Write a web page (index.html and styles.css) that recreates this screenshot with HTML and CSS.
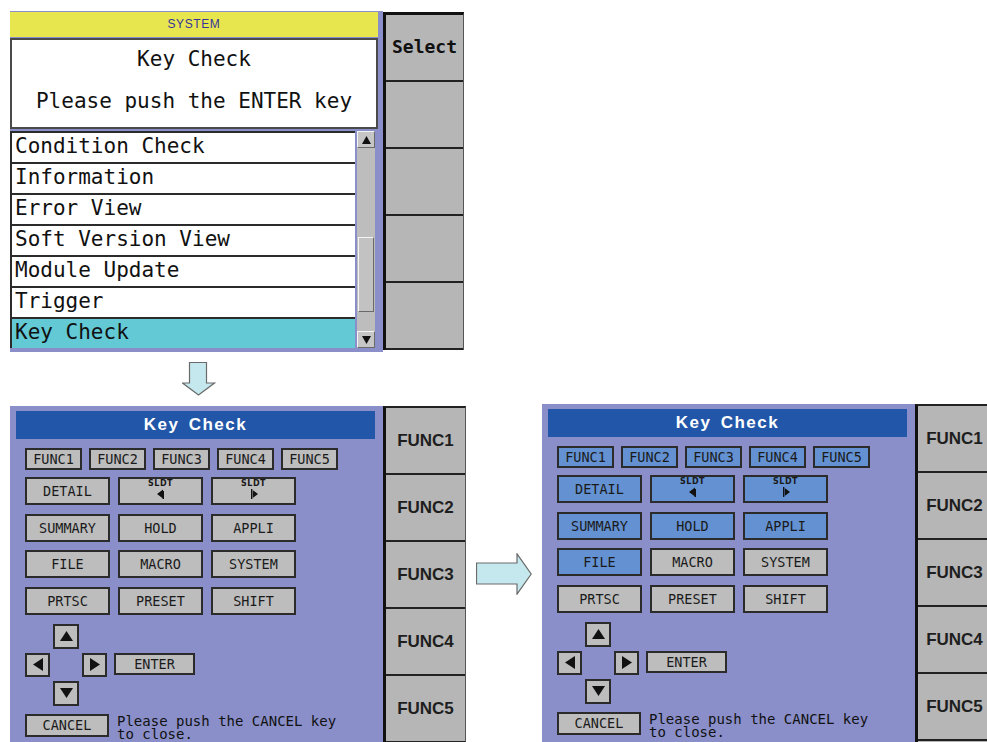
FILE: index.html
```html
<!DOCTYPE html>
<html lang="en">
<head>
    <meta charset="UTF-8">
    <meta name="viewport" content="width=device-width, initial-scale=1.0">
    <title>Key Check</title>
    <link rel="stylesheet" href="styles.css">
</head>
<body>

    <div class="page">
        <!-- SYSTEM menu screen -->
        <div class="screen screen-system">
            <div class="system-main">
                <div class="system-title">SYSTEM</div>
                <div class="msg-box">
                    <div class="msg-first">Key Check</div>
                    <div class="msg-second">Please push the ENTER key</div>
                </div>
                <div class="list-area">
                    <ul class="menu-list">
                        <li class="menu-item">Condition Check</li>
                        <li class="menu-item">Information</li>
                        <li class="menu-item">Error View</li>
                        <li class="menu-item">Soft Version View</li>
                        <li class="menu-item">Module Update</li>
                        <li class="menu-item">Trigger</li>
                        <li class="menu-item selected">Key Check</li>
                    </ul>
                    <div class="scrollbar">
                        <div class="scroll-btn">
                            <svg width="9" height="8" viewBox="0 0 9 8"><path d="M4.5 0 L9 8 H0 Z" fill="#111"/></svg>
                        </div>
                        <div class="scroll-track"><div class="scroll-thumb"></div></div>
                        <div class="scroll-btn">
                            <svg width="9" height="8" viewBox="0 0 9 8"><path d="M0 0 H9 L4.5 8 Z" fill="#111"/></svg>
                        </div>
                    </div>
                </div>
            </div>
            <div class="softkeys softkeys-system">
                <div class="softkey softkey-select">Select</div>
                <div class="softkey"></div>
                <div class="softkey"></div>
                <div class="softkey"></div>
                <div class="softkey"></div>
            </div>
        </div>

        <div class="down-arrow">
            <svg width="34" height="34" viewBox="0 0 34 34">
                <path d="M7.5 0.5 H24.5 V21 H32.5 L16.5 33 L0.5 21 H7.5 Z" fill="#c5e8ef" stroke="#6a6a6a" stroke-width="1.2"/>
            </svg>
        </div>

        <div class="bottom-row">
            <!-- Key Check screen, before -->
            <div class="screen screen-key screen-before">
                <div class="key-main">
                    <div class="key-title">Key Check</div>
                    <div class="key-body">
                        <div class="func-row">
                            <div class="kbtn kbtn-small">FUNC1</div>
                            <div class="kbtn kbtn-small">FUNC2</div>
                            <div class="kbtn kbtn-small">FUNC3</div>
                            <div class="kbtn kbtn-small">FUNC4</div>
                            <div class="kbtn kbtn-small">FUNC5</div>
                        </div>
                        <div class="key-grid">
                            <div class="kbtn">DETAIL</div>
                            <div class="kbtn kbtn-sldt">
                                <span class="sldt-label">SLDT</span>
                                <svg width="8" height="10" viewBox="0 0 8 10"><path d="M0 5 L6 0.5 V9.5 Z M5.5 2 H7 V10 H5.5 Z" fill="#111"/></svg>
                            </div>
                            <div class="kbtn kbtn-sldt">
                                <span class="sldt-label">SLDT</span>
                                <svg width="8" height="10" viewBox="0 0 8 10"><path d="M8 5 L2 0.5 V9.5 Z M1 0 H2.5 V10 H1 Z" fill="#111"/></svg>
                            </div>
                            <div class="kbtn">SUMMARY</div>
                            <div class="kbtn">HOLD</div>
                            <div class="kbtn">APPLI</div>
                            <div class="kbtn">FILE</div>
                            <div class="kbtn">MACRO</div>
                            <div class="kbtn">SYSTEM</div>
                            <div class="kbtn">PRTSC</div>
                            <div class="kbtn">PRESET</div>
                            <div class="kbtn">SHIFT</div>
                        </div>
                        <div class="dpad">
                            <div class="kbtn dkey dkey-up"><svg width="13" height="10" viewBox="0 0 13 10"><path d="M6.5 0 L13 10 H0 Z" fill="#111"/></svg></div>
                            <div class="kbtn dkey dkey-left"><svg width="10" height="13" viewBox="0 0 10 13"><path d="M0 6.5 L10 0 V13 Z" fill="#111"/></svg></div>
                            <div class="kbtn dkey dkey-right"><svg width="10" height="13" viewBox="0 0 10 13"><path d="M10 6.5 L0 0 V13 Z" fill="#111"/></svg></div>
                            <div class="kbtn dkey-enter">ENTER</div>
                            <div class="kbtn dkey dkey-down"><svg width="13" height="10" viewBox="0 0 13 10"><path d="M0 0 H13 L6.5 10 Z" fill="#111"/></svg></div>
                        </div>
                        <div class="cancel-row">
                            <div class="kbtn kbtn-cancel">CANCEL</div>
                            <div class="cancel-note">Please push the CANCEL key to close.</div>
                        </div>
                    </div>
                </div>
                <div class="softkeys softkeys-key">
                    <div class="softkey softkey-func">FUNC1</div>
                    <div class="softkey softkey-func">FUNC2</div>
                    <div class="softkey softkey-func">FUNC3</div>
                    <div class="softkey softkey-func">FUNC4</div>
                    <div class="softkey softkey-func">FUNC5</div>
                </div>
            </div>

            <div class="right-arrow">
                <svg width="56" height="42" viewBox="0 0 56 42">
                    <path d="M0.5 10 H41 V0.8 L55.2 21 L41 41.2 V31 H0.5 Z" fill="#c5e8ef" stroke="#6a6a6a" stroke-width="1.2"/>
                </svg>
            </div>

            <!-- Key Check screen, after pressing keys -->
            <div class="screen screen-key screen-after">
                <div class="key-main">
                    <div class="key-title">Key Check</div>
                    <div class="key-body">
                        <div class="func-row">
                            <div class="kbtn kbtn-small pressed">FUNC1</div>
                            <div class="kbtn kbtn-small pressed">FUNC2</div>
                            <div class="kbtn kbtn-small pressed">FUNC3</div>
                            <div class="kbtn kbtn-small pressed">FUNC4</div>
                            <div class="kbtn kbtn-small pressed">FUNC5</div>
                        </div>
                        <div class="key-grid">
                            <div class="kbtn pressed">DETAIL</div>
                            <div class="kbtn kbtn-sldt pressed">
                                <span class="sldt-label">SLDT</span>
                                <svg width="8" height="10" viewBox="0 0 8 10"><path d="M0 5 L6 0.5 V9.5 Z M5.5 2 H7 V10 H5.5 Z" fill="#111"/></svg>
                            </div>
                            <div class="kbtn kbtn-sldt pressed">
                                <span class="sldt-label">SLDT</span>
                                <svg width="8" height="10" viewBox="0 0 8 10"><path d="M8 5 L2 0.5 V9.5 Z M1 0 H2.5 V10 H1 Z" fill="#111"/></svg>
                            </div>
                            <div class="kbtn pressed">SUMMARY</div>
                            <div class="kbtn pressed">HOLD</div>
                            <div class="kbtn pressed">APPLI</div>
                            <div class="kbtn pressed">FILE</div>
                            <div class="kbtn">MACRO</div>
                            <div class="kbtn">SYSTEM</div>
                            <div class="kbtn">PRTSC</div>
                            <div class="kbtn">PRESET</div>
                            <div class="kbtn">SHIFT</div>
                        </div>
                        <div class="dpad">
                            <div class="kbtn dkey dkey-up"><svg width="13" height="10" viewBox="0 0 13 10"><path d="M6.5 0 L13 10 H0 Z" fill="#111"/></svg></div>
                            <div class="kbtn dkey dkey-left"><svg width="10" height="13" viewBox="0 0 10 13"><path d="M0 6.5 L10 0 V13 Z" fill="#111"/></svg></div>
                            <div class="kbtn dkey dkey-right"><svg width="10" height="13" viewBox="0 0 10 13"><path d="M10 6.5 L0 0 V13 Z" fill="#111"/></svg></div>
                            <div class="kbtn dkey-enter">ENTER</div>
                            <div class="kbtn dkey dkey-down"><svg width="13" height="10" viewBox="0 0 13 10"><path d="M0 0 H13 L6.5 10 Z" fill="#111"/></svg></div>
                        </div>
                        <div class="cancel-row">
                            <div class="kbtn kbtn-cancel">CANCEL</div>
                            <div class="cancel-note">Please push the CANCEL key to close.</div>
                        </div>
                    </div>
                </div>
                <div class="softkeys softkeys-key softkeys-cut">
                    <div class="softkey softkey-func">FUNC1</div>
                    <div class="softkey softkey-func">FUNC2</div>
                    <div class="softkey softkey-func">FUNC3</div>
                    <div class="softkey softkey-func">FUNC4</div>
                    <div class="softkey softkey-func">FUNC5</div>
                </div>
            </div>
        </div>
    </div>

</body>
</html>
```

FILE: styles.css
```css
* {
    box-sizing: border-box;
}
html, body {
    margin: 0;
    overflow: hidden;
}
body {
    width: 987px;
    height: 742px;
    background-color: #ffffff;
    font-family: "DejaVu Sans Mono", monospace;
    color: #111;
}
.page {
    padding-top: 11px;
}
.screen {
    display: flex;
    align-items: flex-start;
    flex-shrink: 0;
}

/* SYSTEM screen */
.screen-system {
    margin-left: 10px;
}
.system-main {
    width: 373px;
    background-color: #8a8fc9;
    padding: 1px 0 4px;
}
.system-title {
    width: 368px;
    height: 25px;
    line-height: 25px;
    background-color: #e8e64f;
    color: #35359a;
    font-family: "Liberation Sans", Arial, sans-serif;
    font-size: 12px;
    letter-spacing: 0.6px;
    text-align: center;
}
.msg-box {
    width: 368px;
    height: 91px;
    margin-top: 1px;
    border: 2px solid #4a4a4a;
    background-color: #fff;
    text-align: center;
    font-size: 21px;
}
.msg-first {
    height: 38px;
    line-height: 38px;
}
.msg-second {
    height: 46px;
    line-height: 46px;
}
.list-area {
    display: flex;
    gap: 2px;
    width: 365px;
    margin-top: 2px;
}
.menu-list {
    list-style: none;
    margin: 0;
    padding: 0;
    width: 345px;
}
.menu-item {
    height: 31px;
    line-height: 27px;
    border-top: 2px solid #2b2b2b;
    border-left: 2px solid #2b2b2b;
    background-color: #fff;
    padding-left: 3px;
    font-size: 21px;
    white-space: nowrap;
}
.menu-item.selected {
    background-color: #62c9d5;
}
.scrollbar {
    width: 18px;
    height: 217px;
    display: flex;
    flex-direction: column;
    background-color: #bdbdbd;
}
.scroll-btn {
    height: 17px;
    display: flex;
    align-items: center;
    justify-content: center;
    background-color: #c6c6c6;
    border: 1px solid;
    border-color: #f4f4f4 #6a6a6a #6a6a6a #f4f4f4;
}
.scroll-track {
    flex: 1;
    padding: 89px 1px 0;
}
.scroll-thumb {
    height: 75px;
    background-color: #c2c2c2;
    border: 1px solid;
    border-color: #f4f4f4 #6a6a6a #6a6a6a #f4f4f4;
}

/* soft keys on the right of each screen */
.softkeys {
    background-color: #b6b6b6;
    border-left: 3px solid #111;
    border-right: 1px solid #555;
}
.softkeys-system {
    width: 81px;
    margin-top: 1px;
    border-top: 3px solid #111;
}
.softkeys-key {
    width: 83px;
    border-top: 2px solid #222;
}
.softkeys-cut {
    width: 72px;
    border-right: none;
}
.softkey {
    height: 67px;
    border-bottom: 2px solid #222;
    display: flex;
    align-items: center;
    justify-content: center;
}
.softkey-select {
    font-weight: bold;
    font-size: 18px;
    align-items: flex-start;
    padding-top: 21px;
}
.softkey-func {
    font-family: "Liberation Sans", Arial, sans-serif;
    font-weight: bold;
    font-size: 17px;
    color: #1e1e1e;
}
.softkeys-cut .softkey-func {
    padding-left: 4px;
}

/* arrows between screens */
.down-arrow {
    margin: 10px 0 0 182px;
    height: 34px;
}
.down-arrow svg,
.right-arrow svg {
    display: block;
}
.bottom-row {
    display: flex;
    align-items: flex-start;
    margin-top: 8px;
}
.right-arrow {
    margin: 149px 0 0 10px;
    flex-shrink: 0;
}

/* Key Check screens */
.screen-key {
    align-items: stretch;
    overflow: hidden;
}
.screen-before {
    margin-left: 10px;
    margin-top: 2px;
    height: 337px;
}
.screen-after {
    margin-left: 10px;
    height: 339px;
}
.key-main {
    width: 373px;
    background-color: #8a8fc9;
    padding: 5px 8px 0 6px;
}
.key-title {
    height: 28px;
    line-height: 28px;
    background-color: #2256a8;
    color: #fff;
    font-family: "Liberation Sans", Arial, sans-serif;
    font-weight: bold;
    font-size: 17px;
    letter-spacing: 1.5px;
    word-spacing: 3px;
    text-align: center;
}
.key-body {
    padding-left: 9px;
}
.kbtn {
    display: flex;
    align-items: center;
    justify-content: center;
    background-color: #bdbdbd;
    border: 2px solid #2b2b2b;
    font-size: 13.5px;
    color: #1a1a1a;
}
.kbtn.pressed {
    background-color: #6391d1;
}
.func-row {
    display: flex;
    gap: 7px;
    margin-top: 9px;
}
.kbtn-small {
    width: 57px;
    height: 22px;
}
.key-grid {
    display: grid;
    grid-template-columns: repeat(3, 85px);
    grid-auto-rows: 28px;
    column-gap: 8px;
    row-gap: 8.66px;
    margin-top: 7px;
}
.kbtn-sldt {
    flex-direction: column;
    justify-content: flex-start;
    padding-top: 1px;
}
.sldt-label {
    font-family: "DejaVu Sans", sans-serif;
    font-weight: bold;
    font-size: 8px;
    line-height: 8px;
    letter-spacing: 0.5px;
}
.kbtn-sldt svg {
    display: block;
    margin-top: 1px;
}
.dpad {
    display: grid;
    grid-template-columns: 25px 26px 25px 85px;
    grid-template-rows: 25px 24px 25px;
    column-gap: 3px;
    row-gap: 4px;
    margin-top: 9px;
}
.dkey-up {
    grid-column: 2;
    grid-row: 1;
}
.dkey-left {
    grid-column: 1;
    grid-row: 2;
}
.dkey-right {
    grid-column: 3;
    grid-row: 2;
}
.dkey-enter {
    grid-column: 4;
    grid-row: 2;
    height: 22px;
    margin-left: 4px;
}
.dkey-down {
    grid-column: 2;
    grid-row: 3;
}
.cancel-row {
    display: flex;
    gap: 8px;
    margin-top: 8px;
}
.kbtn-cancel {
    width: 84px;
    height: 23px;
    flex-shrink: 0;
}
.cancel-note {
    width: 226px;
    font-size: 14px;
    line-height: 13px;
    padding-top: 1px;
}
```
